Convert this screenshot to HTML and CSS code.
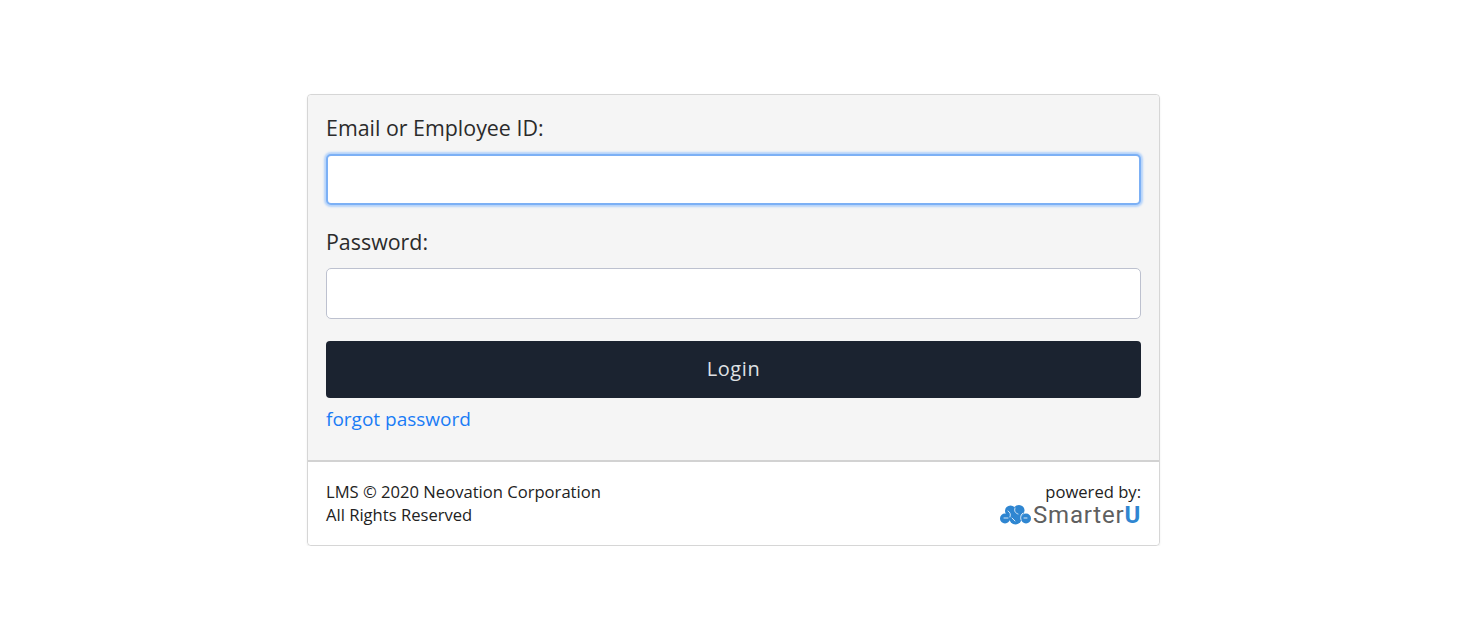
FILE: index.html
```html
<!doctype html>
<html lang="en">
  <head>
    <meta charset="utf-8" />
    <meta name="viewport" content="width=device-width, initial-scale=1" />
    <title>Login</title>
    <link rel="stylesheet" href="styles.css">
  </head>
  <body>
    <div class="card">
      <form class="card-body" onsubmit="event.preventDefault()">
        <label class="label" for="email">Email or Employee ID:</label>
        <input class="input focused" type="text" id="email" />
        <label class="label label-password" for="password">Password:</label>
        <input class="input" type="password" id="password" />
        <button class="login" type="submit">Login</button>
        <a class="forgot" href="#">forgot password</a>
      </form>
      <footer class="card-footer">
        <p class="legal">LMS © 2020 Neovation Corporation<br />All Rights Reserved</p>
        <div class="powered">
          <span class="powered-by">powered by:</span>
          <span class="brand">
            <svg class="brand-icon" width="31" height="20" viewBox="0 0 31 20" aria-hidden="true">
              <g fill="#2f86d1">
                <circle cx="5" cy="13.5" r="5" />
                <circle cx="10.5" cy="6" r="5.5" />
                <circle cx="19" cy="5.5" r="5.5" />
                <circle cx="26" cy="13.5" r="5" />
                <circle cx="15.5" cy="13" r="6.5" />
              </g>
              <g fill="none" stroke="#d6e7f6" stroke-width="1" stroke-linecap="round">
                <path d="M8 6c2 1 3 3 2 6" />
                <path d="M15 3c-1 3 0 5 3 6" />
                <path d="M23 8c-2 1-3 4-2 7" />
                <path d="M4 13h4" />
                <path d="M12 13l3 3" />
                <path d="M24 13h3" />
              </g>
            </svg>
            <span class="brand-name">Smarter<span class="brand-u">U</span></span>
          </span>
        </div>
      </footer>
    </div>
  </body>
</html>
```

FILE: styles.css
```css
body {
  margin: 0;
  background: #fff;
  color: #2b2b2b;
  font-family: "Open Sans", sans-serif;
}
.card {
  width: 853px;
  margin: 94px 0 0 307px;
  border: 1px solid #d6d6d6;
  border-radius: 4px;
  box-sizing: border-box;
  box-shadow: 0 1px 2px rgba(0, 0, 0, 0.08);
}
.card-body {
  display: flex;
  flex-direction: column;
  padding: 19px 18px 27px;
  background: #f5f5f5;
  border-bottom: 2px solid #d2d2d2;
  border-radius: 4px 4px 0 0;
}
.label {
  font-size: 21.4px;
  line-height: 28px;
  margin-bottom: 12px;
}
.label-password {
  margin-top: 23px;
}
.input {
  height: 51px;
  box-sizing: border-box;
  background: #fff;
  border: 1px solid #bdc1cf;
  border-radius: 5px;
  outline: none;
}
.focused {
  border: 2px solid #7cb0f5;
  box-shadow: 0 0 2px 2px #b5d3fa;
}
.login {
  height: 57px;
  margin-top: 22px;
  padding: 0 0 2px;
  background: #1b2330;
  color: #dfe1e4;
  font-family: inherit;
  font-size: 20px;
  letter-spacing: 0.6px;
  border: none;
  border-radius: 4px;
  cursor: pointer;
}
.forgot {
  margin-top: 7px;
  font-size: 19px;
  line-height: 28px;
  color: #1a7cf5;
  text-decoration: none;
}
.card-footer {
  display: flex;
  justify-content: space-between;
  padding: 18px 18px 19px;
  background: #fff;
  border-radius: 0 0 4px 4px;
}
.legal {
  margin: 0;
  font-size: 16.6px;
  line-height: 23px;
  color: #222;
}
.powered {
  display: flex;
  flex-direction: column;
  align-items: flex-end;
}
.powered-by {
  font-size: 16.6px;
  line-height: 23px;
  color: #222;
}
.brand {
  display: flex;
  align-items: center;
  gap: 2px;
  height: 23px;
}
.brand-name {
  font-family: "Roboto", sans-serif;
  font-size: 24px;
  line-height: 18px;
  letter-spacing: 0.8px;
  color: #5f5f5f;
}
.brand-u {
  color: #2f86d1;
  font-weight: 700;
}
```
